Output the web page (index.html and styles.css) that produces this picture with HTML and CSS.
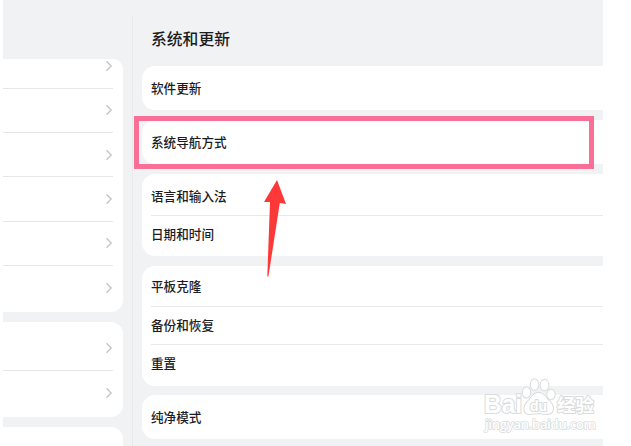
FILE: index.html
```html
<!DOCTYPE html>
<html lang="zh-CN">
<head>
  <meta charset="UTF-8">
  <meta name="viewport" content="width=device-width, initial-scale=1.0">
  <title>系统和更新</title>
  <link rel="stylesheet" href="styles.css">
</head>
<body>
  <svg class="defs" width="0" height="0">
    <symbol id="chevron" viewBox="0 0 8 12">
      <path d="M1.5 1.2 L6.2 6 L1.5 10.8" fill="none" stroke="#c4c4c5" stroke-width="1.3"/>
    </symbol>
  </svg>

  <div class="screen">
    <div class="sidebar">
      <div class="menu">
        <div class="item first"><svg class="chevron"><use href="#chevron"/></svg></div>
        <div class="item"><svg class="chevron"><use href="#chevron"/></svg></div>
        <div class="item"><svg class="chevron"><use href="#chevron"/></svg></div>
        <div class="item"><svg class="chevron"><use href="#chevron"/></svg></div>
        <div class="item"><svg class="chevron"><use href="#chevron"/></svg></div>
        <div class="item last"><svg class="chevron"><use href="#chevron"/></svg></div>
      </div>
      <div class="menu">
        <div class="item second"><svg class="chevron"><use href="#chevron"/></svg></div>
        <div class="item last"><svg class="chevron"><use href="#chevron"/></svg></div>
      </div>
      <div class="menu"></div>
    </div>

    <div class="divider"></div>

    <div class="content">
      <h2>系统和更新</h2>
      <div class="card">
        <div class="row">软件更新</div>
      </div>
      <div class="card">
        <div class="row">系统导航方式</div>
      </div>
      <div class="card double">
        <div class="row">语言和输入法</div>
        <div class="row">日期和时间</div>
      </div>
      <div class="card triple">
        <div class="row">平板克隆</div>
        <div class="row">备份和恢复</div>
        <div class="row">重置</div>
      </div>
      <div class="card">
        <div class="row">纯净模式</div>
      </div>
    </div>
  </div>

  <div class="highlight"></div>
  <svg class="arrow" width="24" height="98" viewBox="0 0 24 98">
    <path d="M14 0 L23 24 L16.8 23 L5.4 96.5 L4.3 96.5 L7 22 L1 22 Z" fill="#fd3838"/>
  </svg>

  <svg class="watermark" width="120" height="62" viewBox="0 0 120 62">
    <g fill="#fff" stroke="#dadbdc" stroke-width="2" stroke-linejoin="round" paint-order="stroke">
      <text class="brand" x="3" y="37" textLength="38" lengthAdjust="spacingAndGlyphs">Bai</text>
      <ellipse cx="45.5" cy="16.5" rx="3.7" ry="5"/>
      <ellipse cx="53.5" cy="8.5" rx="3.7" ry="5.2"/>
      <ellipse cx="63.5" cy="9" rx="3.9" ry="5.2"/>
      <ellipse cx="70" cy="18.5" rx="3.7" ry="4.7"/>
      <path d="M57.5 17 C63 17 65 22 68 25 C74 30 73 38 66 38 C62 38 60 37.3 57.5 37.3 C55 37.3 52 38 49 38 C42 38 42 30 47 25.5 C51 21.5 52 17 57.5 17 Z"/>
      <text class="paw-text" x="49" y="35" textLength="17">du</text>
      <text class="brand-cn" x="76" y="35.5" textLength="37">经验</text>
      <text class="url" x="4" y="53" textLength="111">jingyan.baidu.com</text>
    </g>
  </svg>
</body>
</html>
```

FILE: styles.css
```css
body {
  margin: 0;
  width: 631px;
  height: 446px;
  overflow: hidden;
  position: relative;
  background-color: #fff;
  font-family: "Noto Sans CJK SC", sans-serif;
  color: #1c1c1e;
}
.defs {
  position: absolute;
}
.screen {
  display: flex;
  width: 600px;
  height: 446px;
  margin-left: 3px;
  overflow: hidden;
  background-color: #f1f2f4;
}
.sidebar {
  display: flex;
  flex-direction: column;
  gap: 10px;
  width: 120px;
  padding-top: 59px;
}
.menu {
  flex-shrink: 0;
  box-sizing: border-box;
  min-height: 95px;
  padding-right: 10px;
  border-radius: 0 12px 12px 0;
  background-color: #fff;
}
.menu:first-child {
  height: 253px;
  border-top-right-radius: 10px;
}
.item {
  box-sizing: border-box;
  display: flex;
  align-items: center;
  justify-content: flex-end;
  height: 44.3px;
  border-bottom: 1px solid #e6e6e7;
}
.item.first {
  height: 29.7px;
  padding-bottom: 15px;
}
.item.second {
  height: 49px;
  padding-top: 4px;
}
.item.last {
  border-bottom: none;
}
.chevron {
  width: 8px;
  height: 12px;
}
.divider {
  width: 1px;
  margin: 16px 9px 0 9px;
  background-color: #e7e9eb;
}
.content {
  flex: 1;
}
h2 {
  height: 66px;
  margin: 0 0 0 9px;
  padding-top: 27px;
  box-sizing: border-box;
  font-size: 15.8px;
  font-weight: 500;
  line-height: 24px;
}
.card {
  box-sizing: border-box;
  height: 44px;
  margin-bottom: 10px;
  padding-left: 9px;
  border-radius: 13px 0 0 13px;
  background-color: #fff;
}
.card.double {
  height: 82px;
  margin-bottom: 9.5px;
  padding-top: 3px;
}
.card.triple {
  height: 120px;
  margin-bottom: 9.5px;
  padding-top: 2.5px;
}
.row {
  height: 44px;
  font-size: 12.6px;
  font-weight: 500;
  line-height: 44px;
}
.double .row,
.triple .row {
  height: 38px;
  line-height: 38px;
}
.triple .row {
  line-height: 36px;
}
.double .row + .row,
.triple .row + .row {
  box-sizing: border-box;
  border-top: 1px solid #e8e8ea;
  line-height: 35px;
}
.highlight {
  position: absolute;
  left: 134px;
  top: 116px;
  width: 450px;
  height: 43px;
  border: 5px solid #f97096;
}
.arrow {
  position: absolute;
  left: 263px;
  top: 180px;
}
.watermark {
  position: absolute;
  left: 481px;
  top: 376px;
}
.brand {
  font: bold 25px "Liberation Sans", sans-serif;
}
.paw-text {
  font: bold 14px "Liberation Sans", sans-serif;
}
.brand-cn {
  font: bold 18.5px "Noto Sans CJK SC", sans-serif;
}
.url {
  font: 600 13px "Open Sans", sans-serif;
  stroke-width: 1.5px;
}
```
